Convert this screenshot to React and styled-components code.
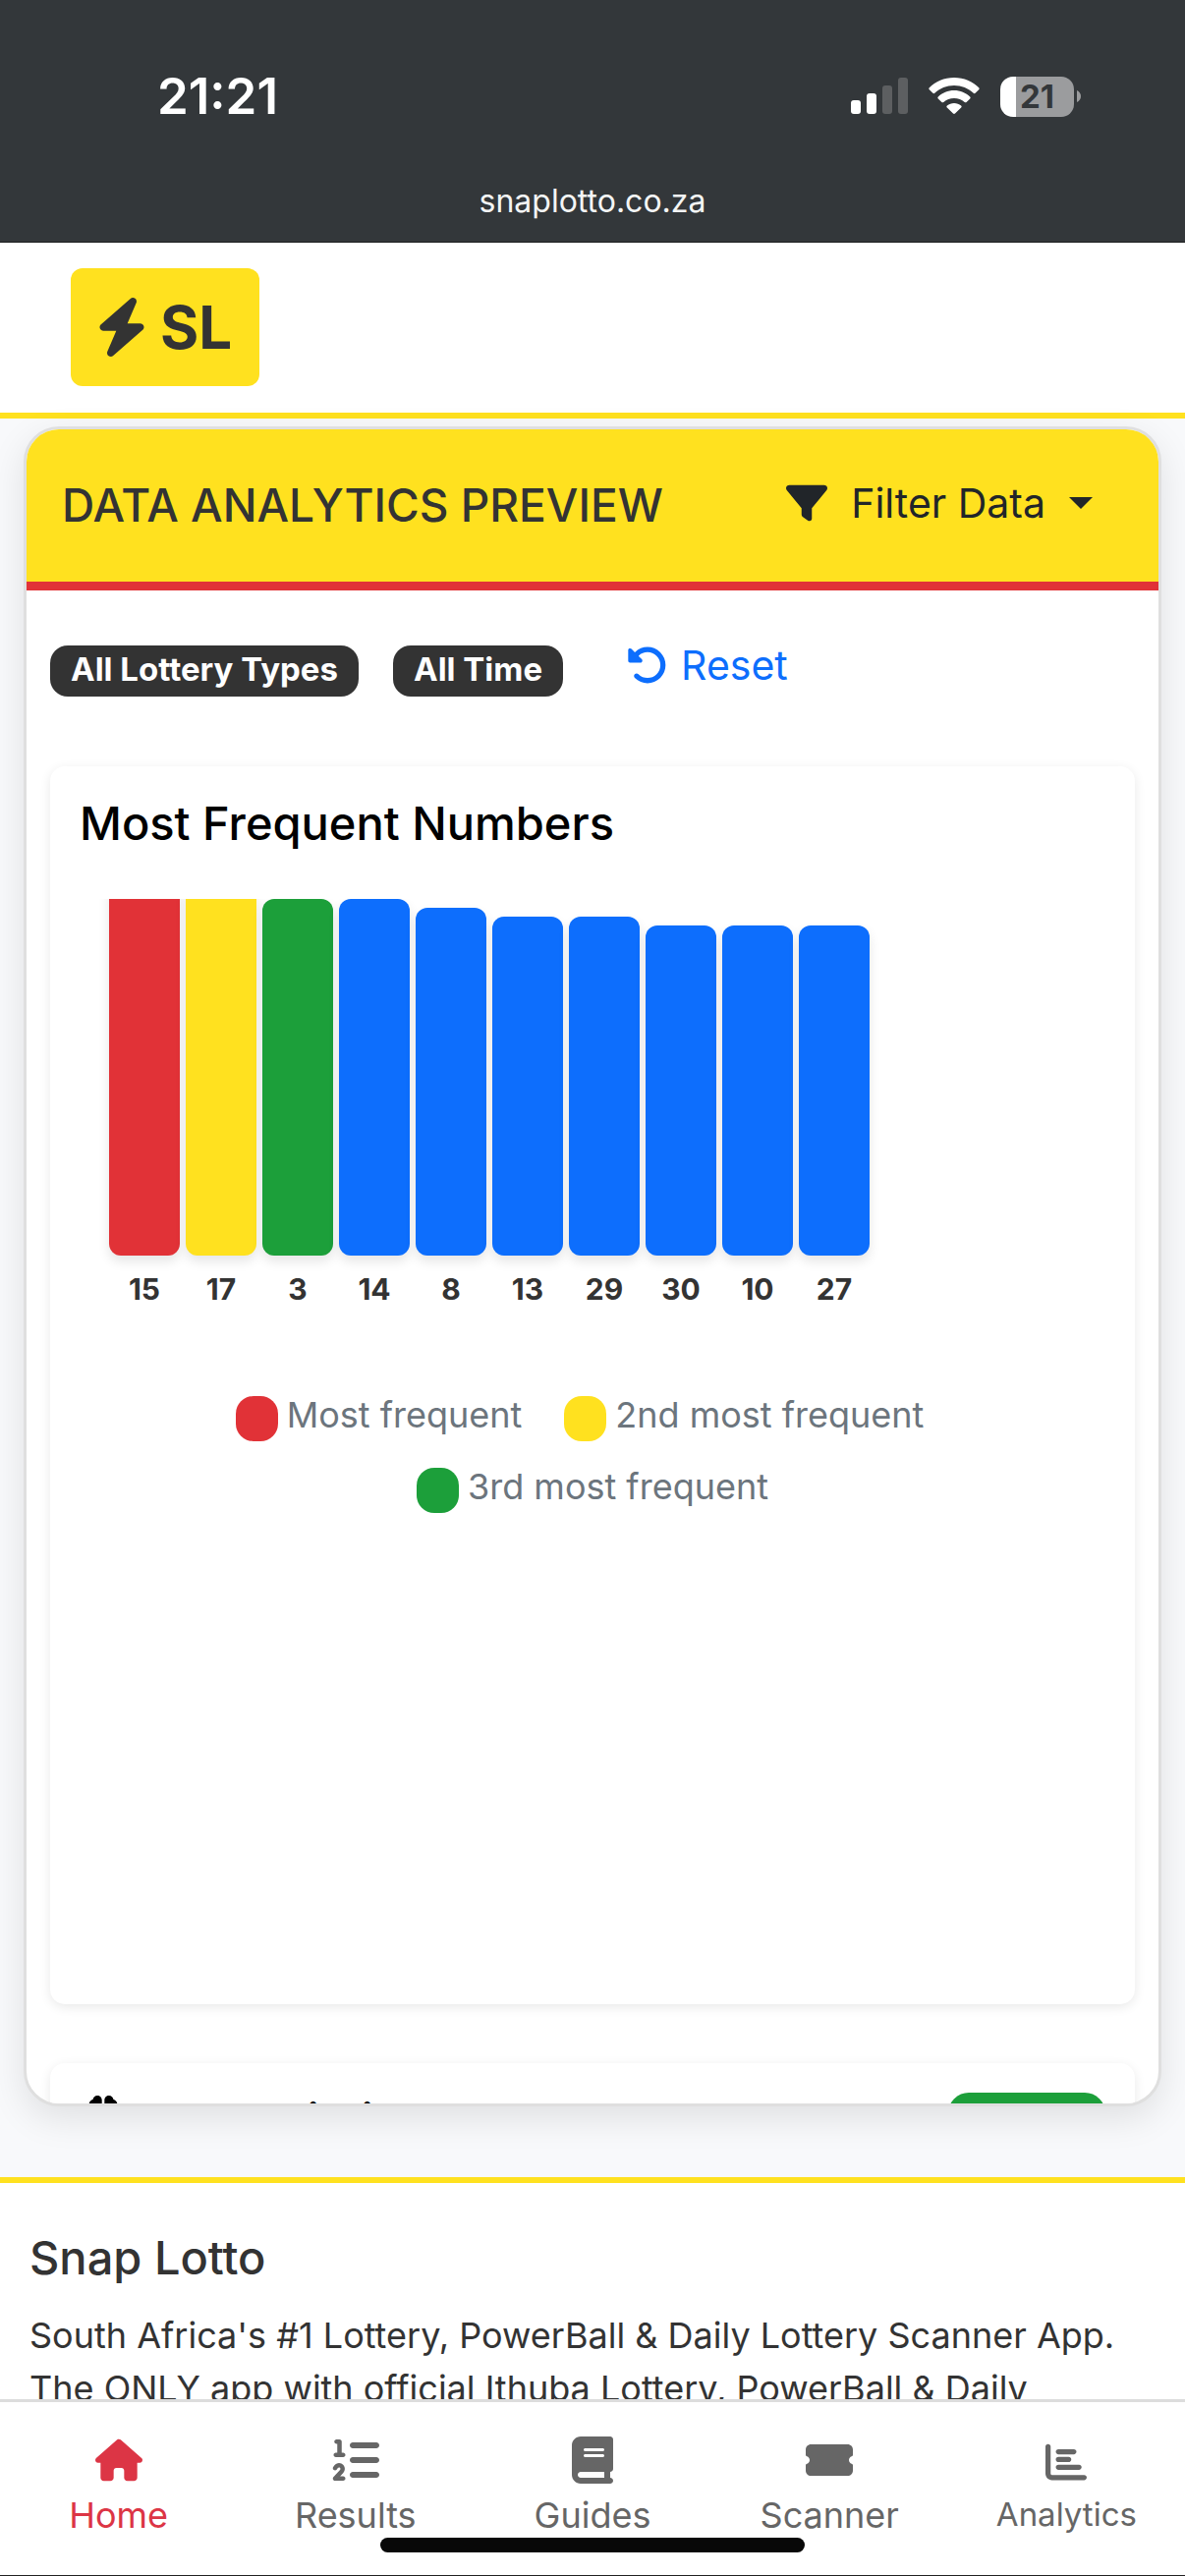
import React from "react";
import styled, { createGlobalStyle } from "styled-components";
import {
  FaBolt,
  FaBook,
  FaBrain,
  FaChartBar,
  FaFilter,
  FaHouse,
  FaListOl,
  FaRotateLeft,
  FaTicketSimple,
} from "react-icons/fa6";

const colors = {
  yellow: "#ffe11f",
  red: "#e13237",
  green: "#1c9f3a",
  blue: "#0d6efd",
  ink: "#333333",
  muted: "#6c757d",
  nav: "#666666",
};

const GlobalStyle = createGlobalStyle`
  * { box-sizing: border-box; }
  body { margin: 0; background: #f8f9fb; }
  h1, h2, p, ul, ol { margin: 0; padding: 0; }
  ul, ol { list-style: none; }
  button { border: 0; background: none; padding: 0; font: inherit; color: inherit; }
  a { color: inherit; text-decoration: none; }
`;

const Page = styled.div`
  display: flex;
  flex-direction: column;
  height: 100vh;
  overflow: hidden;
  color: ${colors.ink};
  font-family: Inter, "Liberation Sans", sans-serif;
  font-size: 36px;
  line-height: 54px;
`;

const BrowserBar = styled.div`
  flex: none;
  background: #33373a;
  border-bottom: 1px solid #1b1d1e;
  color: #fff;
`;

const StatusRow = styled.div`
  display: flex;
  align-items: center;
  justify-content: space-between;
  height: 172px;
  padding: 24px 106px 0 160px;
`;

const Clock = styled.time`
  font-size: 51px;
  font-weight: 600;
`;

const StatusIcons = styled.div`
  display: flex;
  align-items: center;
  gap: 21px;
`;

const Battery = styled.div`
  display: flex;
  align-items: center;
  gap: 3px;
`;

const BatteryBody = styled.span`
  display: flex;
  align-items: center;
  justify-content: center;
  width: 75px;
  height: 41px;
  border-radius: 13px;
  background: linear-gradient(to right, #fff 16px, #9b9c9e 16px);
  color: #33373a;
  font-size: 33px;
  font-weight: 700;
  line-height: 41px;
`;

const Address = styled.div`
  height: 74px;
  color: #f4f5f5;
  font-size: 32px;
  line-height: 66px;
  text-align: center;
`;

const Scroll = styled.div`
  flex: 1;
  min-height: 0;
  overflow: hidden;
`;

const SiteHeader = styled.header`
  padding: 26px 72px 27px;
  background: #fff;
  border-bottom: 6px solid ${colors.yellow};
`;

const Logo = styled.a`
  display: inline-flex;
  align-items: center;
  gap: 9px;
  height: 120px;
  padding: 0 28px 0 22px;
  border-radius: 12px;
  background: ${colors.yellow};
  font-size: 60px;
  font-weight: 700;
  vertical-align: top;

  svg {
    width: auto;
    height: 60px;
  }
`;

const Main = styled.main`
  padding: 8px 24px 72px;
`;

const Panel = styled.section`
  height: 1710px;
  overflow: hidden;
  border: 3px solid #dfdfdf;
  border-radius: 36px;
  background: #fff;
  box-shadow: 0 12px 36px rgba(0, 0, 0, 0.1);
`;

const PanelHeader = styled.div`
  display: flex;
  align-items: center;
  justify-content: space-between;
  height: 164px;
  padding: 0 67px 2px 36px;
  background: ${colors.yellow};
  border-bottom: 9px solid ${colors.red};
`;

const PanelTitle = styled.h1`
  font-size: 46px;
  font-weight: 500;
  line-height: 56px;
`;

const Title = styled.h2`
  color: ${(p) => p.$color || colors.ink};
  font-size: 47px;
  font-weight: 500;
  line-height: 56px;
`;

const FilterButton = styled.button`
  display: flex;
  align-items: center;
  padding-bottom: 3px;
  color: #212529;
  font-size: 41px;

  svg {
    width: auto;
    height: 42px;
    margin-right: 24px;
  }

  &::after {
    content: "";
    margin-left: 24px;
    border-top: 12px solid;
    border-left: 12px solid transparent;
    border-right: 12px solid transparent;
  }
`;

const PanelBody = styled.div`
  padding: 45px 24px 0;
`;

const FilterRow = styled.div`
  display: flex;
  align-items: flex-start;
  height: 66px;
  margin-bottom: 68px;
`;

const Tag = styled.span`
  display: block;
  height: 52px;
  margin: 11px 35px 0 0;
  padding: 0 21px;
  border-radius: 18px;
  background: ${colors.ink};
  color: #fff;
  font-size: 33px;
  font-weight: 700;
  line-height: 48px;
`;

const ResetButton = styled.button`
  display: flex;
  align-items: center;
  gap: 13px;
  margin: 4px 0 0 30px;
  color: ${colors.blue};
  font-size: 41px;

  svg {
    width: auto;
    height: 42px;
  }
`;

const Card = styled.section`
  min-height: ${(p) => p.$minHeight || 0}px;
  margin-bottom: 60px;
  padding: 30px;
  border-radius: 15px;
  background: #fff;
  box-shadow: 0 3px 12px rgba(0, 0, 0, 0.09);
`;

const Chart = styled.ol`
  display: flex;
  gap: 6px;
  height: 424px;
  margin-top: 49px;
  padding-left: 30px;
  overflow: hidden;
`;

const ChartColumn = styled.li`
  display: flex;
  flex: none;
  flex-direction: column;
  justify-content: flex-end;
  gap: 7px;
  width: 72px;
  font-size: 30px;
  font-weight: 700;
  line-height: 54px;
  text-align: center;
`;

const Bar = styled.span`
  flex: none;
  border-radius: 12px;
  background: ${(p) => p.$color};
  box-shadow: 0 6px 12px rgba(0, 0, 0, 0.1);
`;

const Legend = styled.ul`
  display: flex;
  flex-wrap: wrap;
  justify-content: center;
  column-gap: 17px;
  margin-top: 64px;
  color: ${colors.muted};
`;

const LegendItem = styled.li`
  display: flex;
  align-items: center;
  gap: 9px;
  height: 73px;
  margin-right: 26px;

  &:last-child {
    margin-right: 0;
  }
`;

const Swatch = styled.i`
  width: 43px;
  height: 46px;
  margin-top: 9px;
  border-radius: 18px;
  background: ${(p) => p.$color};
`;

const PredictionHead = styled.div`
  display: flex;
  align-items: flex-start;
  justify-content: space-between;
  padding-left: 3px;
`;

const PredictionTitle = styled.div`
  display: flex;
  align-items: flex-start;
  gap: 24px;

  svg {
    width: auto;
    height: 42px;
    margin-top: 3px;
    color: #000;
  }
`;

const StatusPill = styled.span`
  width: 160px;
  height: 52px;
  border-radius: 21px;
  background: ${colors.green};
`;

const Footer = styled.footer`
  padding: 48px 30px 0;
  background: #fff;
  border-top: 6px solid ${colors.yellow};
`;

const FooterText = styled.p`
  margin-top: 24px;
`;

const TabBar = styled.nav`
  flex: none;
  height: 180px;
  background: #fff;
  border-top: 3px solid #dcdcdc;
  border-bottom: 1px solid #222;
`;

const Tabs = styled.ul`
  display: grid;
  grid-template-columns: repeat(5, 1fr);
  height: 138px;
  padding-top: 35px;
`;

const Tab = styled.a`
  display: flex;
  flex-direction: column;
  align-items: center;
  gap: 5px;
  color: ${(p) => (p.$active ? "#dc3545" : colors.nav)};
  font-size: ${(p) => (p.$compact ? 33 : 36)}px;

  svg {
    width: auto;
    height: ${(p) => (p.$compact ? 42 : 48)}px;
    margin-top: ${(p) => (p.$compact ? 5 : 0)}px;
  }
`;

const HomeIndicator = styled.div`
  width: 432px;
  height: 15px;
  margin: 0 auto;
  border-radius: 8px;
  background: #080808;
`;

const frequencies = [
  { number: 15, height: 381, color: colors.red },
  { number: 17, height: 378, color: colors.yellow },
  { number: 3, height: 363, color: colors.green },
  { number: 14, height: 363 },
  { number: 8, height: 354 },
  { number: 13, height: 345 },
  { number: 29, height: 345 },
  { number: 30, height: 336 },
  { number: 10, height: 336 },
  { number: 27, height: 336 },
];

const legend = [
  { label: "Most frequent", color: colors.red },
  { label: "2nd most frequent", color: colors.yellow },
  { label: "3rd most frequent", color: colors.green },
];

const tabs = [
  { label: "Home", Icon: FaHouse, active: true },
  { label: "Results", Icon: FaListOl },
  { label: "Guides", Icon: FaBook },
  { label: "Scanner", Icon: FaTicketSimple },
  { label: "Analytics", Icon: FaChartBar, compact: true },
];

function SignalIcon() {
  return (
    <svg width="58" height="38" viewBox="0 0 58 38" aria-hidden="true">
      <rect x="0" y="23" width="10" height="14" rx="3" fill="#fff" />
      <rect x="16" y="16" width="10" height="21" rx="3" fill="#fff" />
      <rect x="32" y="8" width="10" height="29" rx="3" fill="#5d5f61" />
      <rect x="48" y="0" width="10" height="37" rx="3" fill="#5d5f61" />
    </svg>
  );
}

function WifiIcon() {
  return (
    <svg width="52" height="38" viewBox="0 0 52 38" fill="#fff" aria-hidden="true">
      <path d="M26 0C16 0 7 4 .8 10.3c-.6.6-.6 1.3 0 1.9l3.6 3.6c.6.6 1.3.6 1.9 0C11.500 11 18.400 8 26 8s14.500 3 19.700 7.800c.6.6 1.300.6 1.900 0l3.600-3.600c.6-.6.6-1.300 0-1.900C45 4 36 0 26 0Z" />
      <path d="M26 13c-6.300 0-12 2.500-16.200 6.500-.6.6-.6 1.300 0 1.900l3.600 3.500c.6.6 1.300.6 1.900.1C18.200 22.500 21.900 21 26 21s7.800 1.500 10.700 4c.6.5 1.300.5 1.900-.1l3.600-3.500c.6-.6.6-1.300 0-1.900C38 15.500 32.300 13 26 13Z" />
      <path d="M26 26c-2.700 0-5.200 1-7.100 2.600-.7.6-.7 1.300-.1 1.900l6.200 6.100c.6.6 1.400.6 2 0l6.200-6.100c.6-.6.6-1.300-.1-1.900C31.200 27 28.700 26 26 26Z" />
    </svg>
  );
}

function BatteryCap() {
  return (
    <svg width="4" height="12" viewBox="0 0 4 12" aria-hidden="true">
      <path d="M0 0c2.500 1 4 3.400 4 6s-1.500 5-4 6Z" fill="#9b9c9e" />
    </svg>
  );
}

export default function App() {
  return (
    <Page>
      <GlobalStyle />
      <BrowserBar>
        <StatusRow>
          <Clock>21:21</Clock>
          <StatusIcons>
            <SignalIcon />
            <WifiIcon />
            <Battery>
              <BatteryBody>21</BatteryBody>
              <BatteryCap />
            </Battery>
          </StatusIcons>
        </StatusRow>
        <Address>snaplotto.co.za</Address>
      </BrowserBar>

      <Scroll>
        <SiteHeader>
          <Logo href="#">
            <FaBolt />
            SL
          </Logo>
        </SiteHeader>

        <Main>
          <Panel>
            <PanelHeader>
              <PanelTitle>DATA ANALYTICS PREVIEW</PanelTitle>
              <FilterButton type="button">
                <FaFilter />
                Filter Data
              </FilterButton>
            </PanelHeader>
            <PanelBody>
              <FilterRow>
                <Tag>All Lottery Types</Tag>
                <Tag>All Time</Tag>
                <ResetButton type="button">
                  <FaRotateLeft />
                  Reset
                </ResetButton>
              </FilterRow>

              <Card $minHeight={1260}>
                <Title $color="#000">Most Frequent Numbers</Title>
                <Chart>
                  {frequencies.map(({ number, height, color }) => (
                    <ChartColumn key={number}>
                      <Bar $color={color || colors.blue} style={{ height }} />
                      {number}
                    </ChartColumn>
                  ))}
                </Chart>
                <Legend>
                  {legend.map(({ label, color }) => (
                    <LegendItem key={label}>
                      <Swatch $color={color} />
                      {label}
                    </LegendItem>
                  ))}
                </Legend>
              </Card>

              <Card>
                <PredictionHead>
                  <PredictionTitle>
                    <FaBrain />
                    <Title $color="#000">AI Predictions</Title>
                  </PredictionTitle>
                  <StatusPill />
                </PredictionHead>
              </Card>
            </PanelBody>
          </Panel>
        </Main>

        <Footer>
          <Title>Snap Lotto</Title>
          <FooterText>
            South Africa's #1 Lottery, PowerBall &amp; Daily Lottery Scanner App. The
            ONLY app with official Ithuba Lottery, PowerBall &amp; Daily
          </FooterText>
        </Footer>
      </Scroll>

      <TabBar>
        <Tabs>
          {tabs.map(({ label, Icon, active, compact }) => (
            <li key={label}>
              <Tab href="#" $active={active} $compact={compact}>
                <Icon />
                {label}
              </Tab>
            </li>
          ))}
        </Tabs>
        <HomeIndicator />
      </TabBar>
    </Page>
  );
}
